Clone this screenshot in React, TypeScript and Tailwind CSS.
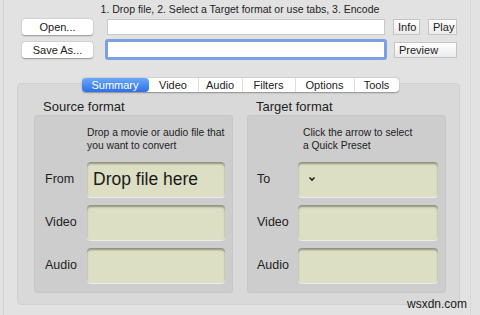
import React from "react";

function Field({ children }: { children?: React.ReactNode }) {
  return (
    <div className="h-[35px] flex-1 rounded-[4px] bg-[#dcdfc4] shadow-[inset_0_2px_2px_rgba(0,0,0,0.35),0_1px_0_rgba(255,255,255,0.6)] flex items-center">
      {children}
    </div>
  );
}

function Row({ label, lw, children }: { label: string; lw: string; children?: React.ReactNode }) {
  return (
    <div className="flex items-center h-[35px]">
      <div className={`${lw} text-[12.5px] text-[#1e1e1e] shrink-0`}>{label}</div>
      {children}
    </div>
  );
}

function SquareBtn({ label, w }: { label: string; w: string }) {
  return (
    <div
      className={`${w} h-[16px] border border-[#c4c4c4] bg-gradient-to-b from-[#ffffff] to-[#ebebeb] text-[11px] leading-[14px] pl-[4px] text-[#222]`}
    >
      {label}
    </div>
  );
}

export default function App() {
  const tabs = ["Summary", "Video", "Audio", "Filters", "Options", "Tools"];
  const tabW = ["w-[67px]", "w-[49px]", "w-[44px]", "w-[53px]", "w-[59px]", "w-[45px]"];
  return (
    <div
      className="w-[480px] h-[315px] bg-[#e2e2e2] overflow-hidden relative"
      style={{ fontFamily: "'Liberation Sans', Arial, sans-serif" }}
    >
      <div className="absolute left-[3px] top-0 bottom-0 w-px bg-[#d2d2d2]" />
      <div className="absolute left-[470px] top-0 bottom-0 w-px bg-[#d6d6d6]" />
      <div className="pt-[3px] text-center text-[10.5px] leading-[13px] text-[#222]">
        1. Drop file, 2. Select a Target format or use tabs, 3. Encode
      </div>
      {/* row 1 */}
      <div className="flex items-center mt-[3px] h-[16px]">
        <div className="ml-[22px] w-[71px] h-[16px] rounded-[3px] bg-white shadow-[0_0.5px_1.5px_rgba(0,0,0,0.35)] text-center text-[11px] leading-[16px] text-[#222]">
          Open...
        </div>
        <div className="ml-[14px] w-[278px] h-[16px] bg-white border border-[#c8c8c8]" />
        <div className="ml-[8px] flex gap-[8px]">
          <SquareBtn label="Info" w="w-[27px]" />
          <SquareBtn label="Play" w="w-[29px]" />
        </div>
      </div>
      {/* row 2 */}
      <div className="flex items-center mt-[4px] h-[21px]">
        <div className="ml-[22px] w-[71px] h-[16px] rounded-[3px] bg-white shadow-[0_0.5px_1.5px_rgba(0,0,0,0.35)] text-center text-[11px] leading-[16px] text-[#222]">
          Save As...
        </div>
        <div className="ml-[12px] w-[282px] h-[21px] bg-white rounded-[3px] border-[3px] border-[#7ba1e0]" />
        <div className="ml-[7px]">
          <SquareBtn label="Preview" w="w-[63px]" />
        </div>
      </div>
      {/* tabs */}
      <div className="relative z-10 mt-[18px] flex justify-center">
        <div className="flex h-[14px] rounded-[4px] bg-white shadow-[0_0.5px_1.5px_rgba(0,0,0,0.35)] text-[11px] leading-[14px] text-[#222]">
          {tabs.map((t, i) => (
            <div
              key={t}
              className={`${tabW[i]} text-center ${
                i === 0
                  ? "rounded-[4px] bg-gradient-to-b from-[#6aa8f8] to-[#2f6fe6] text-white"
                  : i === 1
                  ? ""
                  : "border-l border-[#dedede]"
              }`}
            >
              {t}
            </div>
          ))}
        </div>
      </div>
      {/* panel */}
      <div className="ml-[17px] w-[443px] h-[222px] -mt-[9px] rounded-[4px] bg-[#d9d9d9] border border-[#d0d0d0] flex pl-[16px] pt-[14px] gap-[14px]">
        {[
          {
            title: "Source format",
            d1: "Drop a movie or audio file that",
            d2: "you want to convert",
            dpl: "pl-[52px]",
            lw: "w-[52px] pl-[10px]",
            rows: ["From", "Video", "Audio"],
          },
          {
            title: "Target format",
            d1: "Click the arrow to select",
            d2: "a Quick Preset",
            dpl: "pl-[55px]",
            lw: "w-[50px] pl-[9px]",
            rows: ["To", "Video", "Audio"],
          },
        ].map((col, ci) => (
          <div key={col.title} className="w-[199px] flex flex-col">
            <div className="pl-[9px] text-[13px] leading-[17px] text-[#1e1e1e]">{col.title}</div>
            <div className="h-[178px] rounded-[3px] bg-[#cdcdcd] border border-[#c6c6c6] pr-[7px]">
              <div className={`${col.dpl} pt-[10px] text-[10.3px] leading-[13px] text-[#222] whitespace-nowrap`}>
                <div>{col.d1}</div>
                <div>{col.d2}</div>
              </div>
              <div className="mt-[10px] flex flex-col gap-[8px]">
                <Row label={col.rows[0]} lw={col.lw}>
                  {ci === 0 ? (
                    <Field>
                      <span className="pl-[6px] text-[17.5px] text-[#1a1a1a]">Drop file here</span>
                    </Field>
                  ) : (
                    <Field>
                      <svg width="8" height="6" viewBox="0 0 8 6" className="ml-[10px] -mt-[2px]">
                        <path d="M1.5 1.5 L4 4 L6.5 1.5" fill="none" stroke="#222" strokeWidth="1.6" />
                      </svg>
                    </Field>
                  )}
                </Row>
                <Row label={col.rows[1]} lw={col.lw}>
                  <Field />
                </Row>
                <Row label={col.rows[2]} lw={col.lw}>
                  <Field />
                </Row>
              </div>
            </div>
          </div>
        ))}
      </div>
      <div className="absolute left-[407px] top-[297px] text-[12px] leading-[15px] text-[#1a1a1a]">wsxdn.com</div>
    </div>
  );
}
